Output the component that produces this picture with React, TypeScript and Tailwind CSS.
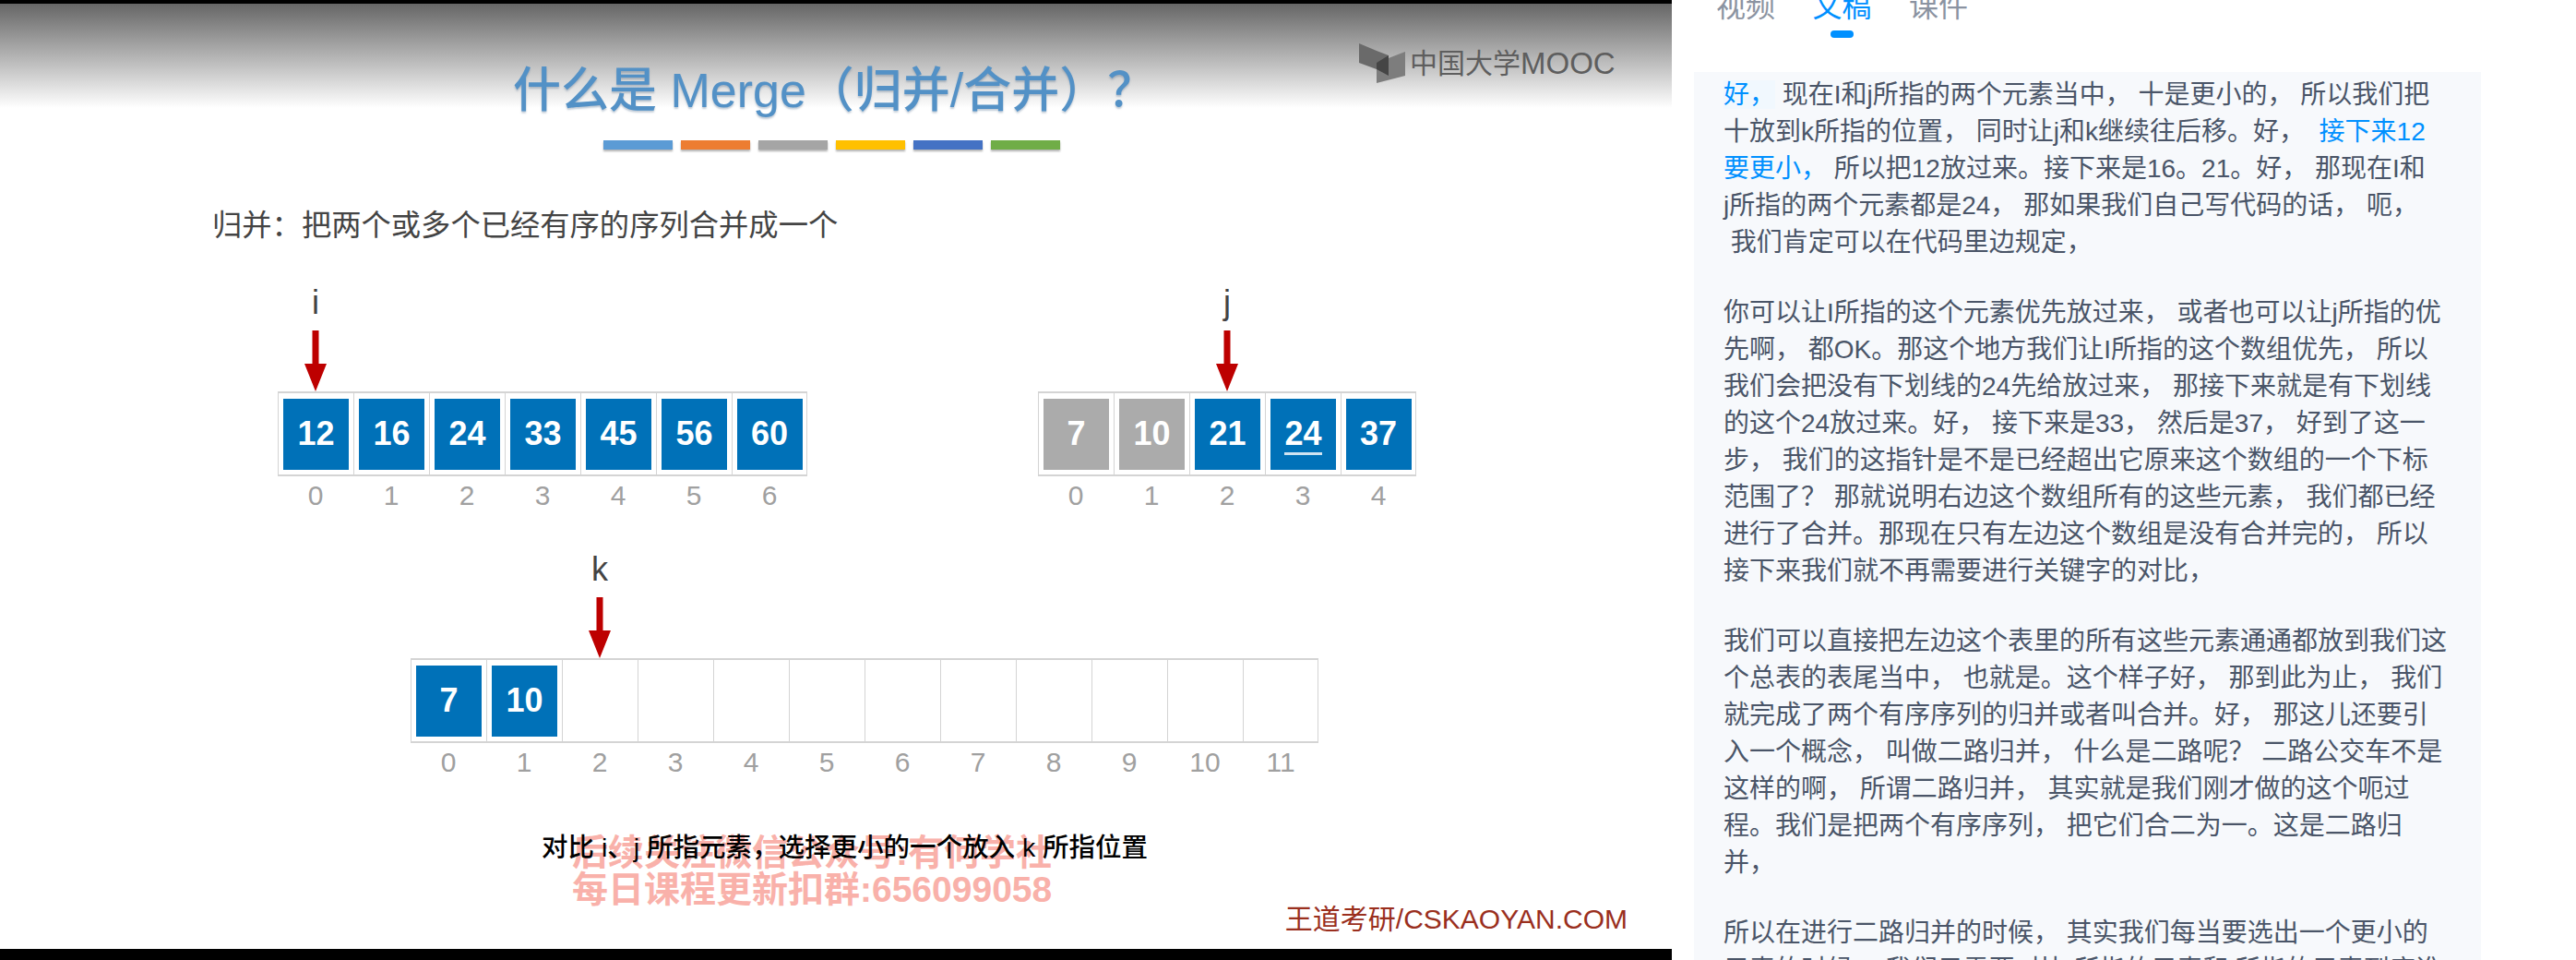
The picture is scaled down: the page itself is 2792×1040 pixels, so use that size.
import React from 'react';

type Tone = 'blue' | 'gray';

type Item = {
  value?: string;
  tone?: Tone;
  underline?: boolean;
};

const toItems = (values: string[], tone: Tone = 'blue'): Item[] => values.map((value) => ({ value, tone }));

const leftArray = toItems(['12', '16', '24', '33', '45', '56', '60']);
const rightArray: Item[] = [
  ...toItems(['7', '10'], 'gray'),
  { value: '21', tone: 'blue' },
  { value: '24', tone: 'blue', underline: true },
  { value: '37', tone: 'blue' },
];
const mergedArray: Item[] = [...toItems(['7', '10']), ...Array.from({ length: 10 }, () => ({}))];

const titleBars = ['bg-[#5b9bd5]', 'bg-[#ed7d31]', 'bg-[#a5a5a5]', 'bg-[#ffc000]', 'bg-[#4472c4]', 'bg-[#70ad47]'];

// transcript, one array per line so the breaks stay where they are in the picture
const transcript: (string | { blue: string; soft?: boolean })[][] = [
  [{ blue: '好，', soft: true }, ' 现在I和j所指的两个元素当中， 十是更小的， 所以我们把'],
  ['十放到k所指的位置， 同时让j和k继续往后移。好，\u00a0 ', { blue: '接下来12' }],
  [{ blue: '要更小，' }, ' 所以把12放过来。接下来是16。21。好， 那现在I和'],
  ['j所指的两个元素都是24， 那如果我们自己写代码的话， 呃，'],
  ['\u00a0我们肯定可以在代码里边规定，'],
  [],
  ['你可以让I所指的这个元素优先放过来， 或者也可以让j所指的优'],
  ['先啊， 都OK。那这个地方我们让I所指的这个数组优先， 所以'],
  ['我们会把没有下划线的24先给放过来， 那接下来就是有下划线'],
  ['的这个24放过来。好， 接下来是33， 然后是37， 好到了这一'],
  ['步， 我们的这指针是不是已经超出它原来这个数组的一个下标'],
  ['范围了？ 那就说明右边这个数组所有的这些元素， 我们都已经'],
  ['进行了合并。那现在只有左边这个数组是没有合并完的， 所以'],
  ['接下来我们就不再需要进行关键字的对比，'],
  [],
  ['我们可以直接把左边这个表里的所有这些元素通通都放到我们这'],
  ['个总表的表尾当中， 也就是。这个样子好， 那到此为止， 我们'],
  ['就完成了两个有序序列的归并或者叫合并。好， 那这儿还要引'],
  ['入一个概念， 叫做二路归并， 什么是二路呢？ 二路公交车不是'],
  ['这样的啊， 所谓二路归并， 其实就是我们刚才做的这个呃过'],
  ['程。我们是把两个有序序列， 把它们合二为一。这是二路归'],
  ['并，'],
  [],
  ['所以在进行二路归并的时候， 其实我们每当要选出一个更小的'],
  ['元素的时候， 我们只需要对比I所指的元素和j所指的元素到底谁'],
];

const Arrow = () => (
  <svg width="24" height="66" viewBox="0 0 24 66" className="shrink-0">
    <path d="M8.5 0h7v36H24L12 66 0 36h8.5z" fill="#bd0000" />
  </svg>
);

const NumberArray = ({ items, pointer, label }: { items: Item[]; pointer: number; label: string }) => (
  <div className="flex">
    {items.map((item, index) => (
      <div key={index} className="flex w-[82px] flex-col items-center">
        <div className="flex h-[114px] flex-col items-center justify-end">
          {index === pointer && (
            <>
              <span className="mb-[8px] text-[36px] leading-[44px] text-[#444]">{label}</span>
              <Arrow />
            </>
          )}
        </div>
        <div
          className={`flex h-[92px] w-[82px] items-center justify-center border-y-2 border-l border-[#d4d4d4] ${
            index === items.length - 1 ? 'border-r' : ''
          }`}
        >
          {item.value && (
            <div
              className={`relative flex h-[77px] w-[71px] items-center justify-center text-[36px] font-bold text-white ${
                item.tone === 'gray' ? 'bg-[#ababab]' : 'bg-[#0071b8]'
              }`}
            >
              {item.value}
              {item.underline && <span className="absolute bottom-[16px] h-[3px] w-[41px] bg-[#cfe3f1]" />}
            </div>
          )}
        </div>
        <div className="mt-[5px] text-[30px] leading-[32px] text-[#a0a0a0]">{index}</div>
      </div>
    ))}
  </div>
);

const MoocLogo = () => (
  <div className="absolute left-[1472px] top-[43px] flex items-center">
    <svg width="52" height="44" viewBox="0 0 52 44">
      <path d="M1 0l19 8 13 5v22l-13-7-19-7z" fill="#6a6a6a" />
      <path d="M20 21l31-12v26L20 43z" fill="#7d7d7d" />
      <path d="M20 21l13-8v22l-13-7z" fill="#454545" />
    </svg>
    <span className="ml-[4px] text-[30px] leading-[40px] text-[#5e5e5e]">中国大学</span>
    <span className="text-[33px] leading-[40px] text-[#5e5e5e]">MOOC</span>
  </div>
);

const Slide = () => (
  <div className="relative flex flex-1 flex-col bg-[linear-gradient(#666666_0px,#ffffff_113px)]">
    <h1 className="ml-[556px] mt-[64px] text-[52px] font-medium leading-[60px] text-[#5391c6] [text-shadow:0_2px_2px_rgba(80,110,140,0.35)]">
      什么是 Merge（归并/合并）？
    </h1>
    <div className="ml-[654px] mt-[24px] flex gap-[9px]">
      {titleBars.map((color) => (
        <div key={color} className={`h-[10px] w-[75px] shadow-[0_2px_2px_rgba(0,0,0,0.3)] ${color}`} />
      ))}
    </div>
    <p className="ml-[230px] mt-[62px] text-[32.3px] leading-[40px] text-[#444]">归并：把两个或多个已经有序的序列合并成一个</p>

    <div className="ml-[301px] mt-[46px] flex gap-[250px]">
      <NumberArray items={leftArray} pointer={0} label="i" />
      <NumberArray items={rightArray} pointer={2} label="j" />
    </div>
    <div className="ml-[445px] mt-[46px]">
      <NumberArray items={mergedArray} pointer={2} label="k" />
    </div>

    <div className="relative ml-[587px] mt-[58px]">
      <div className="absolute left-[33px] top-[4px] whitespace-nowrap text-[39px] font-bold leading-[40px] text-[#f9b1aa]">
        <div>后续关注微信公众号:有何学社</div>
        <div>每日课程更新扣群:656099058</div>
      </div>
      <p className="relative z-10 whitespace-pre text-[28.5px] font-medium leading-[36px] text-black">对比 i、j 所指元素，选择更小的一个放入 k 所指位置</p>
    </div>

    <div className="absolute bottom-[14px] right-[48px] text-[30px] leading-[36px] text-[#9a2f1e]">王道考研/CSKAOYAN.COM</div>
    <MoocLogo />
  </div>
);

const TabBar = () => (
  <div className="ml-[48px] mt-[-11px] flex gap-[40.5px] text-[32px] leading-[36px]">
    <span className="text-[#8b93a1]">视频</span>
    <div className="relative">
      <span className="text-[#0090ff]">文稿</span>
      <span className="absolute left-[19px] top-[44px] h-[8px] w-[25px] rounded-full bg-[#0090ff]" />
    </div>
    <span className="text-[#8b93a1]">课件</span>
  </div>
);

const Transcript = () => (
  <div className="mt-[53px] ml-[24px] h-[1000px] w-[853px] bg-[#f7f9fc] pl-[32px] pt-[5px] text-[28px] leading-[40px] text-[#4a5568]">
    {transcript.map((line, index) =>
      line.length === 0 ? (
        <div key={index} className="h-[36px]" />
      ) : (
        <div key={index} className="h-[40px] whitespace-pre">
          {line.map((part, partIndex) =>
            typeof part === 'string' ? (
              <span key={partIndex}>{part}</span>
            ) : (
              <span key={partIndex} className={`text-[#0090ff] ${part.soft ? 'bg-[#f1f8fe]' : ''}`}>
                {part.blue}
              </span>
            ),
          )}
        </div>
      ),
    )}
  </div>
);

export default function App() {
  return (
    <div className="flex h-[1040px] w-[2792px] overflow-hidden bg-white font-['Liberation_Sans','Noto_Sans_CJK_SC',sans-serif]">
      <div className="flex w-[1812px] shrink-0 flex-col">
        <div className="h-[4px] bg-black" />
        <Slide />
        <div className="h-[12px] bg-black" />
      </div>
      <div className="flex-1">
        <TabBar />
        <Transcript />
      </div>
    </div>
  );
}
